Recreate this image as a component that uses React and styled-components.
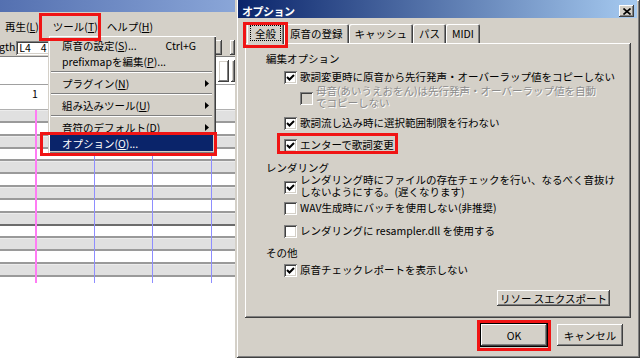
import React from "react"
import styled, { createGlobalStyle, css } from "styled-components"

const FACE = "#d4d0c8"
const NAVY = "#0a246a"

const raised = css`
  box-shadow: inset -1px -1px #404040, inset 1px 1px #fff,
    inset -2px -2px #808080, inset 2px 2px ${FACE};
`
const menuRaised = css`
  box-shadow: inset 1px 1px ${FACE}, inset 2px 2px #fff,
    inset -1px -1px #404040, inset -2px -2px #808080;
`
const sunken = css`
  box-shadow: inset 1px 1px #808080, inset -1px -1px #fff,
    inset 2px 2px #404040, inset -2px -2px ${FACE};
`

const GlobalStyle = createGlobalStyle`
  html, body { margin: 0; padding: 0; background: #fff; }
  body {
    font-family: "Noto Sans CJK JP", "Liberation Sans", sans-serif;
    font-size: 10.5px;
    color: #000;
  }
`

const Screen = styled.div`
  position: relative;
  width: 640px;
  height: 358px;
  overflow: hidden;
  display: flex;
`

/* ---- background editor window ---- */

const MainWindow = styled.div`
  position: relative;
  width: 235px;
  flex: 0 0 235px;
  border-right: 2px solid ${FACE};
  display: flex;
  flex-direction: column;
  background: #fff;
`

const MainTitle = styled.div`
  height: 12px;
  background: linear-gradient(90deg, #5470b0, #8aa6d8);
`

const MenuBar = styled.div`
  height: 26px;
  box-sizing: border-box;
  background: ${FACE};
  display: flex;
  align-items: center;
  padding-top: 4px;
`

const TopMenu = styled.span`
  padding: 0 ${p => (p.$tight ? 4 : 8)}px 0 ${p => p.$lead}px;
  line-height: 14px;
  white-space: nowrap;
`

const ToolRow = styled.div`
  height: 19px;
  box-sizing: border-box;
  background: ${FACE};
  display: flex;
  align-items: flex-end;
  padding-bottom: 1px;
  border-bottom: 1px solid #808080;
`

const ToolLabel = styled.span`
  line-height: 14px;
  margin: 0 1px 1px -1px;
`

const Field = styled.div`
  width: 44px;
  height: 14px;
  padding: 0 3px;
  background: #fff;
  ${sunken};
  display: flex;
  align-items: center;
  gap: 10px;
  line-height: 12px;
`

const SmallBtn = styled.div`
  width: ${p => p.$w}px;
  height: ${p => p.$h}px;
  margin-left: ${p => p.$ml || 0}px;
  background: ${p => p.$bg || FACE};
  ${raised};
`

const FieldRow = styled.div`
  height: 28px;
  box-sizing: border-box;
  display: flex;
  align-items: center;
  border-bottom: 1px solid #a0a0a0;
`

const Ruler = styled.div`
  height: 25px;
  padding: 3px 0 0 32px;
  box-sizing: border-box;
  line-height: 11px;
  border-bottom: 1px solid #b0b0b0;
`

const Grid = styled.div`
  position: relative;
  height: 173px;
  display: flex;
  flex-direction: column;
`

const KeyRow = styled.div`
  flex: 0 0 12.85px;
  box-sizing: border-box;
  background: ${p => (p.$dark ? "#e0e0e0" : "#fff")};
  border-top: 1px solid ${p => (p.$dark ? "#ececec" : "#fff")};
  border-bottom: 2px solid ${p => (p.$octave ? "#6c6c6c" : "#9a9a9a")};
`

const VLine = styled.div`
  position: absolute;
  top: 0;
  bottom: 0;
  left: ${p => p.$x}px;
  width: ${p => p.$w || 1}px;
  background: ${p => p.$c};
`

const DropMenu = styled.div`
  position: absolute;
  left: 48px;
  top: 35px;
  width: 168px;
  box-sizing: border-box;
  padding: 2px 3px 3px 2px;
  background: ${FACE};
  ${menuRaised};
  display: flex;
  flex-direction: column;
`

const MenuEntry = styled.div`
  height: 16px;
  display: flex;
  align-items: center;
  padding: 0 4px 0 12px;
  white-space: nowrap;
  background: ${p => (p.$active ? NAVY : "transparent")};
  color: ${p => (p.$active ? "#fff" : "#000")};
`

const EntryText = styled.span`
  flex: 1;
`

const Shortcut = styled.span`
  margin-right: 13px;
`

const Separator = styled.div`
  height: 0;
  margin: 2px 1px;
  border-top: 1px solid #808080;
  border-bottom: 1px solid #fff;
`

const Arrow = () => (
  <svg width="4" height="7" viewBox="0 0 4 7">
    <polygon points="0,0 4,3.5 0,7" fill="#000" />
  </svg>
)

/* ---- options dialog ---- */

const Dialog = styled.div`
  flex: 1;
  display: flex;
  flex-direction: column;
  background: ${FACE};
  ${raised};
`

const TitleBar = styled.div`
  height: 18px;
  margin: 0 3px 0 1px;
  padding: 0 3px 0 4px;
  display: flex;
  align-items: center;
  justify-content: space-between;
  background: linear-gradient(90deg, ${NAVY}, #a6caf0);
`

const TitleText = styled.span`
  color: #fff;
  font-weight: bold;
  font-size: 11px;
  padding-top: 3px;
  letter-spacing: -0.5px;
`

const CloseBtn = styled.div`
  width: 15px;
  height: 12px;
  margin-top: 4px;
  background: ${FACE};
  ${raised};
  display: flex;
  align-items: center;
  justify-content: center;
`

const Body = styled.div`
  flex: 1;
  display: flex;
  flex-direction: column;
  padding: 4px 9px 0 8px;
`

const TabStrip = styled.div`
  height: 21px;
  display: flex;
  align-items: flex-end;
  padding-left: 2px;
  position: relative;
  z-index: 1;
`

const Tab = styled.div`
  height: ${p => (p.$active ? 22 : 19)}px;
  margin-bottom: ${p => (p.$active ? -1 : 0)}px;
  padding: 0 ${p => (p.$active ? 3 : 6)}px;
  box-sizing: border-box;
  display: flex;
  align-items: center;
  background: ${FACE};
  border-radius: 2px 2px 0 0;
  box-shadow: inset 1px 1px #fff, inset -1px 0 #404040, inset -2px 0 #808080;
  white-space: nowrap;
`

const FocusLabel = styled.span`
  border: 1px dotted #000;
  padding: 1px 4px 0;
  line-height: 13px;
`

const Panel = styled.div`
  height: 275px;
  box-sizing: border-box;
  padding: 2px 2px 0 21px;
  ${raised};
  display: flex;
  flex-direction: column;
`

const GroupHead = styled.div`
  height: 16px;
  margin-top: ${p => p.$mt}px;
  display: flex;
  align-items: center;
`

const CheckRow = styled.label`
  display: flex;
  align-items: ${p => (p.$multi ? "flex-start" : "center")};
  min-height: 16px;
  margin-top: ${p => p.$mt}px;
  margin-left: ${p => (p.$indent ? 34 : 18)}px;
  line-height: 11.5px;
  color: ${p => (p.$disabled ? "#8c8c8c" : "#000")};
  text-shadow: ${p => (p.$disabled ? "1px 1px #fff" : "none")};
`

const Box = styled.span`
  flex: 0 0 13px;
  width: 13px;
  height: 13px;
  margin-top: ${p => (p.$multi ? 7 : 0)}px;
  margin-right: 3px;
  background: ${p => (p.$disabled ? FACE : "#fff")};
  ${sunken};
  display: flex;
  align-items: center;
  justify-content: center;
`

const CheckText = styled.span`
  white-space: pre-line;
`

const BtnRow = styled.div`
  margin-top: 12px;
  padding-right: 19px;
  display: flex;
  justify-content: flex-end;
`

const Button = styled.div`
  width: ${p => p.$w}px;
  height: ${p => p.$h}px;
  box-sizing: border-box;
  display: flex;
  align-items: center;
  justify-content: center;
  background: ${FACE};
  ${raised};
  ${p =>
    p.$default &&
    css`
      border: 1px solid #000;
    `}
  white-space: nowrap;
`

const Footer = styled.div`
  margin-top: 5px;
  padding-right: 8px;
  display: flex;
  justify-content: flex-end;
  align-items: center;
  gap: 9px;
`

const Mark = styled.div`
  position: absolute;
  left: ${p => p.$x}px;
  top: ${p => p.$y}px;
  width: ${p => p.$w}px;
  height: ${p => p.$h}px;
  box-sizing: border-box;
  border: 3px solid #f01414;
  pointer-events: none;
  z-index: 5;
`

const Check = () => (
  <svg width="9" height="9" viewBox="0 0 9 9">
    <polyline points="1,4 3.5,6.5 8,2" fill="none" stroke="#000" strokeWidth="2" />
  </svg>
)

const CheckItem = ({ checked, disabled, indent, multi, mt, children }) => (
  <CheckRow $mt={mt} $indent={indent} $disabled={disabled} $multi={multi}>
    <Box $disabled={disabled} $multi={multi}>{checked && <Check />}</Box>
    <CheckText>{children}</CheckText>
  </CheckRow>
)

const rows = Array.from({ length: 13 }, (_, i) => i)

export default function App() {
  return (
    <>
      <GlobalStyle />
      <Screen>
        <MainWindow>
          <MainTitle />
          <MenuBar>
            <TopMenu $lead={5}>再生(<u>L</u>)</TopMenu>
            <TopMenu $lead={6} $tight>ツール(<u>T</u>)</TopMenu>
            <TopMenu $lead={5}>ヘルプ(<u>H</u>)</TopMenu>
          </MenuBar>
          <ToolRow>
            <ToolLabel>gth</ToolLabel>
            <Field>
              <span>L4</span>
              <span>4</span>
            </Field>
            <SmallBtn $w={11} $h={15} $ml={150} />
            <SmallBtn $w={6} $h={15} $ml={8} />
          </ToolRow>
          <FieldRow>
            <svg width="6" height="8" viewBox="0 0 6 8" style={{ marginLeft: 211 }}>
              <polygon points="0,0 6,4 0,8" fill="#1030e0" />
            </svg>
            <SmallBtn $w={12} $h={22} $ml={2} $bg="#fff" />
            <SmallBtn $w={5} $h={22} $ml={2} $bg="#fff" />
          </FieldRow>
          <Ruler>1</Ruler>
          <Grid>
            {rows.map(i => (
              <KeyRow key={i} $dark={i % 2 === 0} $octave={i === 8} />
            ))}
            <VLine $x={35} $w={2} $c="#ff7cf4" />
            <VLine $x={94} $c="#8e8eff" />
            <VLine $x={152} $c="#8e8eff" />
            <VLine $x={211} $c="#8e8eff" />
          </Grid>

          <DropMenu>
            <MenuEntry>
              <EntryText>原音の設定(<u>S</u>)...</EntryText>
              <Shortcut>Ctrl+G</Shortcut>
            </MenuEntry>
            <MenuEntry>
              <EntryText>prefixmapを編集(<u>P</u>)...</EntryText>
            </MenuEntry>
            <Separator />
            <MenuEntry>
              <EntryText>プラグイン(<u>N</u>)</EntryText>
              <Arrow />
            </MenuEntry>
            <Separator />
            <MenuEntry>
              <EntryText>組み込みツール(<u>U</u>)</EntryText>
              <Arrow />
            </MenuEntry>
            <Separator />
            <MenuEntry>
              <EntryText>音符のデフォルト(<u>D</u>)</EntryText>
              <Arrow />
            </MenuEntry>
            <MenuEntry $active>
              <EntryText>オプション(<u>O</u>)...</EntryText>
            </MenuEntry>
          </DropMenu>
        </MainWindow>

        <Dialog>
          <TitleBar>
            <TitleText>オプション</TitleText>
            <CloseBtn>
              <svg width="8" height="7" viewBox="0 0 8 7">
                <path d="M0.5 0.5 L7.5 6.5 M7.5 0.5 L0.5 6.5" stroke="#000" strokeWidth="1.6" />
              </svg>
            </CloseBtn>
          </TitleBar>
          <Body>
            <TabStrip>
              <Tab $active>
                <FocusLabel>全般</FocusLabel>
              </Tab>
              <Tab>原音の登録</Tab>
              <Tab>キャッシュ</Tab>
              <Tab>パス</Tab>
              <Tab>MIDI</Tab>
            </TabStrip>
            <Panel>
              <GroupHead $mt={5}>編集オプション</GroupHead>
              <CheckItem checked mt={3}>
                歌詞変更時に原音から先行発声・オーバーラップ値をコピーしない
              </CheckItem>
              <CheckItem disabled indent multi mt={0}>
                {"母音(あいうえおをん)は先行発声・オーバーラップ値を自動\nでコピーしない"}
              </CheckItem>
              <CheckItem checked mt={7}>
                歌詞流し込み時に選択範囲制限を行わない
              </CheckItem>
              <CheckItem checked mt={6}>
                エンターで歌詞変更
              </CheckItem>
              <GroupHead $mt={6}>レンダリング</GroupHead>
              <CheckItem checked multi mt={-1}>
                {"レンダリング時にファイルの存在チェックを行い、なるべく音抜け\nしないようにする。(遅くなります)"}
              </CheckItem>
              <CheckItem mt={3}>WAV生成時にバッチを使用しない(非推奨)</CheckItem>
              <CheckItem mt={7}>レンダリングに resampler.dll を使用する</CheckItem>
              <GroupHead $mt={5}>その他</GroupHead>
              <CheckItem checked mt={2}>
                原音チェックレポートを表示しない
              </CheckItem>
              <BtnRow>
                <Button $w={113} $h={16}>リソー スエクスポート</Button>
              </BtnRow>
            </Panel>
            <Footer>
              <Button $w={68} $h={24} $default>OK</Button>
              <Button $w={66} $h={22}>キャンセル</Button>
            </Footer>
          </Body>
        </Dialog>

        <Mark $x={39} $y={13} $w={62} $h={28} />
        <Mark $x={40} $y={132} $w={177} $h={24} />
        <Mark $x={243} $y={22} $w={45} $h={26} />
        <Mark $x={277} $y={133} $w={121} $h={21} />
        <Mark $x={477} $y={320} $w={74} $h={31} />
      </Screen>
    </>
  )
}
